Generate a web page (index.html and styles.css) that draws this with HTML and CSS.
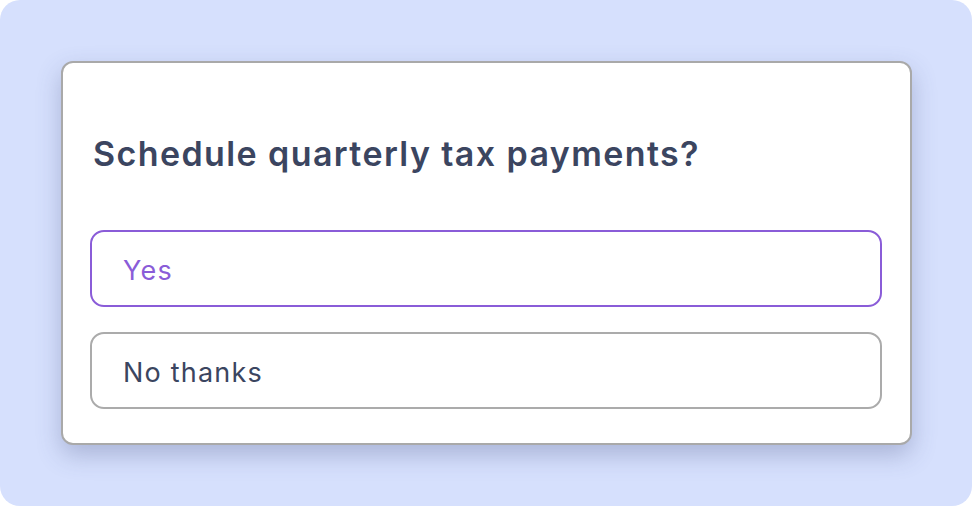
FILE: index.html
```html
<!DOCTYPE html>
<html lang="en">
<head>
    <meta charset="UTF-8">
    <meta name="viewport" content="width=device-width, initial-scale=1.0">
    <title>Quarterly tax payments</title>
    <link rel="stylesheet" href="styles.css">
</head>
<body>
    <div class="frame">
        <!-- Question card -->
        <div class="card">
            <div class="question">Schedule quarterly tax payments?</div>
            <div class="options">
                <button type="button" class="option selected">Yes</button>
                <button type="button" class="option">No thanks</button>
            </div>
        </div>
    </div>
</body>
</html>
```

FILE: styles.css
```css
body {
    margin: 0;
    background-color: #ffffff;
    font-family: Inter, "Noto Sans", sans-serif;
}
.frame {
    width: 972px;
    height: 506px;
    box-sizing: border-box;
    padding: 61px 60px 0 61px;
    background-color: #d6e0fd;
    border-radius: 20px;
}
.card {
    box-sizing: border-box;
    width: 851px;
    height: 384px;
    padding: 71px 28px 0 27px;
    background-color: #ffffff;
    border: 2px solid #a9a9a9;
    border-radius: 12px;
    box-shadow: 0 10px 24px rgba(70, 80, 130, 0.3);
}
.question {
    color: #3b4560;
    font-size: 34px;
    font-weight: 600;
    letter-spacing: 1.4px;
    line-height: 40px;
    padding-left: 3px;
}
.options {
    display: flex;
    flex-direction: column;
    gap: 25px;
    margin-top: 56px;
}
.option {
    height: 77px;
    box-sizing: border-box;
    padding: 3px 0 0 31px;
    text-align: left;
    background-color: #ffffff;
    border: 2px solid #ababab;
    border-radius: 14px;
    color: #3b4560;
    font-family: Inter, "Noto Sans", sans-serif;
    font-size: 27px;
    letter-spacing: 1.2px;
    cursor: pointer;
}
.option.selected {
    border-color: #8a5cd8;
    color: #8a5cd8;
}
```
